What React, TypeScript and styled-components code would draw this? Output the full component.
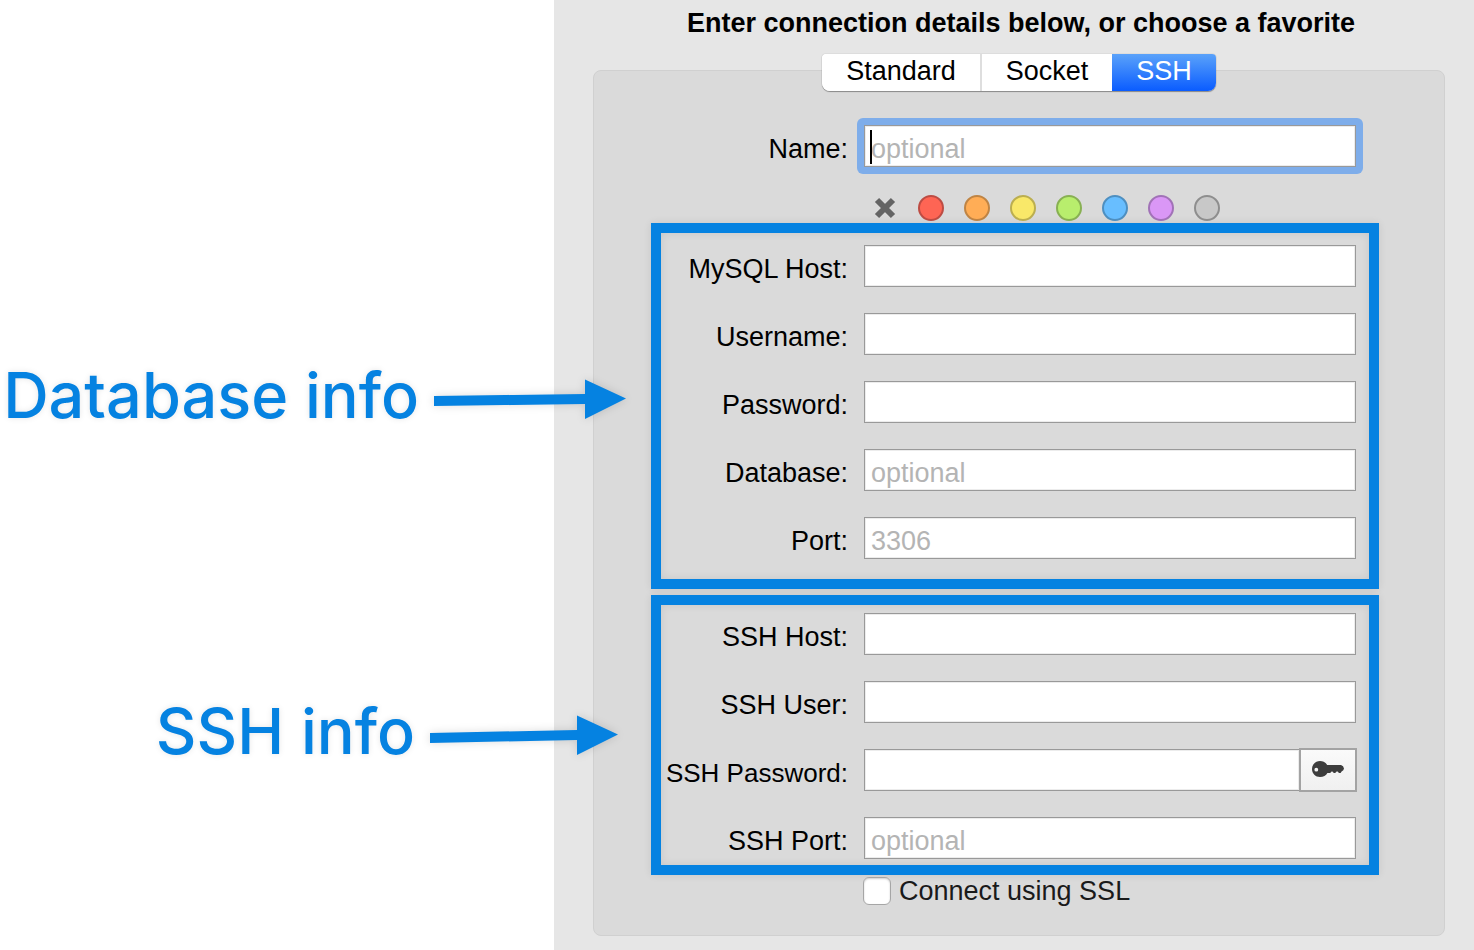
import React from "react";
import styled, { createGlobalStyle } from "styled-components";

const BLUE = "#0582e1";

const GlobalStyle = createGlobalStyle`
  *, *::before, *::after { box-sizing: border-box; }
  body {
    margin: 0;
    background: #fff;
    color: #000;
    font-family: "Liberation Sans", Arial, sans-serif;
    font-size: 27px;
    line-height: 32px;
  }
  button, input { font: inherit; color: inherit; margin: 0; }
`;

const Page = styled.div`
  display: flex;
  min-height: 100vh;
`;

const Notes = styled.aside`
  position: relative;
  z-index: 1;
  flex: 0 0 554px;
  display: flex;
  flex-direction: column;
  gap: 264px;
  padding-top: 359px;
`;

const Note = styled.div<{ $overhang: number }>`
  display: flex;
  align-items: center;
  justify-content: flex-end;
  gap: 15px;
  height: 72px;
  margin-right: -${(p) => p.$overhang}px;
`;

const NoteText = styled.p`
  margin: 0;
  color: ${BLUE};
  font-family: Inter, "Liberation Sans", sans-serif;
  font-size: 63px;
  font-weight: 500;
  line-height: 72px;
  white-space: nowrap;
  text-shadow: 0 0 6px rgba(0, 0, 0, 0.1);
`;

const ArrowSvg = styled.svg`
  flex: none;
  margin-top: 8px;
  overflow: visible;
  fill: ${BLUE};
  filter: drop-shadow(0 0 4px rgba(0, 0, 0, 0.14));
`;

const Arrow = ({ length, drop }: { length: number; drop: number }) => {
  const neck = length - 41;
  return (
    <ArrowSvg width={length} height={40} viewBox={`0 0 ${length} 40`} aria-hidden="true">
      <path
        d={`M0 ${15 + drop} L${neck} 15 V0.5 L${length} 19.5 L${neck} 40 V25 L0 ${25 + drop} Z`}
      />
    </ArrowSvg>
  );
};

const Window = styled.main`
  flex: 1 0 0;
  min-width: 700px;
  padding: 7px 29px 14px 39px;
  background: #e6e6e6;
`;

const Title = styled.h1`
  margin: 0 0 31px;
  padding-left: 4px;
  font-size: 27px;
  font-weight: 700;
  line-height: 32px;
  text-align: center;
`;

const Panel = styled.form`
  padding: 0 65px 30px 57px;
  border: 1px solid #d0d0d0;
  border-radius: 8px;
  background: #dadada;
`;

const TabBar = styled.div`
  display: flex;
  justify-content: center;
  margin: -17px -65px 34px -57px;
`;

const TabGroup = styled.div`
  display: flex;
  height: 37px;
  border-radius: 4px 4px 8px 8px;
  background: #fff;
  box-shadow: 0 1px 1px rgba(0, 0, 0, 0.35), 0 0 1px rgba(0, 0, 0, 0.4);
  overflow: hidden;
`;

const Tab = styled.button<{ $active?: boolean; $divided?: boolean }>`
  padding: 0 24px 3px;
  border: solid #dedede;
  border-width: ${(p) => (p.$divided ? "0 2px 0 0" : "0")};
  line-height: 32px;
  color: ${(p) => (p.$active ? "#fff" : "#000")};
  background: ${(p) => (p.$active ? "linear-gradient(#5aa2fa, #0a5cff)" : "#fff")};
`;

const Group = styled.div<{ $top?: number; $bottom?: number; $outlined?: boolean }>`
  display: grid;
  gap: 26px;
  padding: ${(p) => p.$top ?? 0}px 13px ${(p) => p.$bottom ?? 0}px 0;
  border: solid ${(p) => (p.$outlined ? BLUE : "transparent")};
  border-width: ${(p) => (p.$outlined ? "10px" : "0 10px")};
  box-shadow: ${(p) =>
    p.$outlined
      ? "0 0 8px rgba(0, 0, 0, 0.09), inset 0 0 8px rgba(0, 0, 0, 0.09)"
      : "none"};

  & + & { margin-top: ${(p) => (p.$outlined ? "6px" : "0")}; }
`;

const Row = styled.div`
  display: grid;
  grid-template-columns: 187px 1fr;
  column-gap: 16px;
  height: 42px;
`;

const Label = styled.label<{ $tight?: boolean }>`
  padding-top: 8px;
  font-size: ${(p) => (p.$tight ? "26px" : "27px")};
  text-align: right;
  white-space: nowrap;
`;

const Control = styled.div`
  position: relative;
  display: flex;
  min-width: 0;
`;

const TextBox = styled.input<{ $ring?: boolean }>`
  flex: 1;
  min-width: 0;
  height: 42px;
  padding: 6px 6px 0;
  border: 1px solid #999;
  border-radius: 0;
  outline: none;
  background: #fff;
  box-shadow: inset 0 0 0 1px #ececec${(p) => (p.$ring ? ", 0 0 0 7px #7eadea" : "")};
  ${(p) => p.$ring && "clip-path: inset(-7px round 6px);"}

  &::placeholder { color: #b4b4b4; opacity: 1; }
`;

const Caret = styled.span`
  position: absolute;
  top: 5px;
  left: 6px;
  width: 2px;
  height: 34px;
  background: #000;
`;

const KeyButton = styled.button`
  display: flex;
  align-items: center;
  justify-content: center;
  width: 58px;
  height: 44px;
  margin: -1px;
  padding: 0 0 2px;
  border: 2px solid #a3a3a3;
  background: linear-gradient(#fafafa, #f0f0f0);
`;

const Swatches = styled.div`
  display: flex;
  gap: 20px;
  padding: 28px 0 2px 221px;
`;

const Swatch = styled.button<{ $color?: string; $edge?: string }>`
  display: flex;
  align-items: center;
  justify-content: center;
  width: 26px;
  height: 26px;
  padding: 0;
  border: ${(p) => (p.$edge ? `2px solid ${p.$edge}` : "0")};
  border-radius: 50%;
  background: ${(p) => p.$color ?? "transparent"};
`;

const CheckRow = styled.div`
  display: flex;
  align-items: center;
  gap: 8px;
  height: 28px;
  margin-top: 2px;
  padding-left: 212px;
`;

const CheckBox = styled.input`
  appearance: none;
  width: 28px;
  height: 28px;
  border: 1px solid #a6a6a6;
  border-radius: 6px;
  background: #fff;
  box-shadow: inset 0 1px 2px rgba(0, 0, 0, 0.2);
`;

const CheckLabel = styled.label`
  color: #1a1a1a;
`;

const COLORS = [
  { name: "Red", fill: "#fe6554", edge: "#bd4c43" },
  { name: "Orange", fill: "#ffad56", edge: "#bf8444" },
  { name: "Yellow", fill: "#f9e869", edge: "#bbae50" },
  { name: "Green", fill: "#b8ee6d", edge: "#88b053" },
  { name: "Blue", fill: "#68beff", edge: "#4e8fc0" },
  { name: "Purple", fill: "#da97f6", edge: "#a172b7" },
  { name: "Gray", fill: "#c8c8c8", edge: "#8e8e8e" },
];

type FieldProps = {
  id: string;
  label: string;
  placeholder?: string;
  type?: string;
  ring?: boolean;
  tight?: boolean;
  children?: React.ReactNode;
};

const Field = ({ id, label, placeholder, type = "text", ring, tight, children }: FieldProps) => (
  <Row>
    <Label htmlFor={id} $tight={tight}>{label}</Label>
    <Control>
      <TextBox id={id} type={type} placeholder={placeholder} $ring={ring} />
      {children}
    </Control>
  </Row>
);

export default function App() {
  return (
    <>
      <GlobalStyle />
      <Page>
        <Notes>
          <Note $overhang={72}>
            <NoteText>Database info</NoteText>
            <Arrow length={192} drop={2} />
          </Note>
          <Note $overhang={64}>
            <NoteText>SSH info</NoteText>
            <Arrow length={188} drop={3} />
          </Note>
        </Notes>
        <Window>
          <Title>Enter connection details below, or choose a favorite</Title>
          <Panel>
            <TabBar>
              <TabGroup>
                <Tab type="button" $divided>Standard</Tab>
                <Tab type="button">Socket</Tab>
                <Tab type="button" $active>SSH</Tab>
              </TabGroup>
            </TabBar>
            <Group>
              <Field id="name" label="Name:" placeholder="optional" ring>
                <Caret />
              </Field>
            </Group>
            <Swatches>
              <Swatch type="button" aria-label="No color">
                <svg width="22" height="22" viewBox="0 0 22 22" aria-hidden="true">
                  <path d="M3 3 L19 19 M19 3 L3 19" stroke="#646464" strokeWidth="6" />
                </svg>
              </Swatch>
              {COLORS.map((c) => (
                <Swatch key={c.name} type="button" aria-label={c.name} $color={c.fill} $edge={c.edge} />
              ))}
            </Swatches>
            <Group $outlined $top={12} $bottom={20}>
              <Field id="host" label="MySQL Host:" />
              <Field id="user" label="Username:" />
              <Field id="password" label="Password:" type="password" />
              <Field id="database" label="Database:" placeholder="optional" />
              <Field id="port" label="Port:" placeholder="3306" />
            </Group>
            <Group $outlined $top={8} $bottom={6}>
              <Field id="ssh-host" label="SSH Host:" />
              <Field id="ssh-user" label="SSH User:" />
              <Field id="ssh-password" label="SSH Password:" type="password" tight>
                <KeyButton type="button" aria-label="Choose key file">
                  <svg width="32" height="16" viewBox="0 0 32 16" aria-hidden="true">
                    <path
                      fill="#3d3d3d"
                      fillRule="evenodd"
                      d="M8 0 C11.2 0 13.8 1.6 15.2 4 H29 Q31.6 4.6 32 7.5 Q31.8 9.8 29.6 10.4 L28.6 12 H27 L25.6 10.4 H24.6 L23.2 12 H21.8 L20.4 10.4 H19.6 L18.2 12 H15.4 C14 14.5 11.5 16 8 16 C3.6 16 0 12.5 0 8 C0 3.5 3.6 0 8 0 Z M4.3 6.8 A1.9 1.9 0 1 0 4.3 10.6 A1.9 1.9 0 1 0 4.3 6.8 Z"
                    />
                  </svg>
                </KeyButton>
              </Field>
              <Field id="ssh-port" label="SSH Port:" placeholder="optional" />
            </Group>
            <CheckRow>
              <CheckBox type="checkbox" id="ssl" />
              <CheckLabel htmlFor="ssl">Connect using SSL</CheckLabel>
            </CheckRow>
          </Panel>
        </Window>
      </Page>
    </>
  );
}
